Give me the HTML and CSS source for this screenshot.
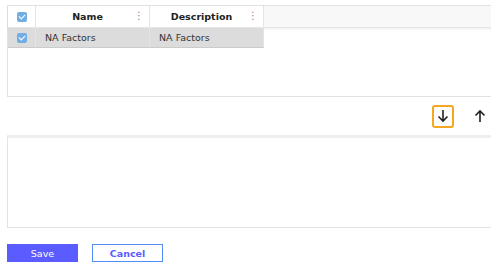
FILE: index.html
```html
<!DOCTYPE html>
<html lang="en">
<head>
    <meta charset="UTF-8">
    <title>Factors</title>
    <link rel="stylesheet" href="styles.css">
</head>
<body>
<div class="page">
    <div class="grid top-grid">
        <div class="grid-header">
            <div class="cell check-cell"><span class="checkbox"></span></div>
            <div class="cell head-cell">Name<span class="menu-dots">⋮</span></div>
            <div class="cell head-cell">Description<span class="menu-dots">⋮</span></div>
            <div class="cell filler"></div>
        </div>
        <div class="grid-row selected">
            <div class="cell check-cell"><span class="checkbox"></span></div>
            <div class="cell body-cell">NA Factors</div>
            <div class="cell body-cell">NA Factors</div>
        </div>
    </div>

    <div class="move-bar">
        <button class="move-btn focused" title="Move down">
            <svg width="12" height="14" viewBox="0 0 12 14"><path d="M6 1v11M1.5 7.5L6 12l4.5-4.5" fill="none" stroke="#222" stroke-width="1.6"/></svg>
        </button>
        <button class="move-btn" title="Move up">
            <svg width="12" height="14" viewBox="0 0 12 14"><path d="M6 13V2M1.5 6.5L6 2l4.5 4.5" fill="none" stroke="#222" stroke-width="1.6"/></svg>
        </button>
    </div>

    <div class="grid bottom-grid"></div>

    <div class="actions">
        <button class="btn btn-save">Save</button>
        <button class="btn btn-cancel">Cancel</button>
    </div>
</div>
</body>
</html>
```
FILE: styles.css
```css
html, body {
    margin: 0;
    overflow: hidden;
    background: #fff;
}

.page {
    padding: 5px 0 0 7px;
    font-family: "DejaVu Sans", Verdana, sans-serif;
    color: #333;
}

.grid {
    width: 500px;
    border: 1px solid #e2e2e2;
    box-sizing: border-box;
}

.top-grid {
    height: 92px;
}

.grid-header {
    display: flex;
    height: 21px;
    border-bottom: 1px solid #e6e6e6;
    box-shadow: 0 1px 2px rgba(0, 0, 0, 0.08);
}

.grid-row {
    display: flex;
    height: 20px;
}

.grid-row.selected .cell {
    background: #dcdcdc;
    border-bottom: 1px solid #cbcbcb;
}

.cell {
    display: flex;
    align-items: center;
    box-sizing: border-box;
    border-right: 1px solid #e4e4e4;
}

.check-cell {
    width: 28px;
    justify-content: center;
}

.head-cell,
.body-cell {
    width: 114px;
}

.head-cell {
    position: relative;
    justify-content: center;
    padding-right: 10px;
    font-size: 9.5px;
    font-weight: bold;
    color: #222;
}

.body-cell {
    padding-left: 9px;
    font-size: 9.5px;
    color: #333;
}

.filler {
    flex: 1;
    background: #f8f8f8;
    border-right: none;
}

.menu-dots {
    position: absolute;
    right: 5px;
    top: 4px;
    font-size: 10px;
    font-weight: normal;
    color: #888;
}

.checkbox {
    width: 10px;
    height: 10px;
    border-radius: 2px;
    background: #72aee6;
    position: relative;
}

.checkbox::after {
    content: "";
    position: absolute;
    left: 3px;
    top: 1px;
    width: 3px;
    height: 5px;
    border: solid #fff;
    border-width: 0 1px 1px 0;
    transform: rotate(45deg);
}

.move-bar {
    display: flex;
    justify-content: flex-end;
    align-items: center;
    gap: 15px;
    height: 38px;
}

.move-btn {
    width: 22px;
    height: 23px;
    border: 2px solid transparent;
    border-radius: 3px;
    background: none;
    padding: 0;
    display: flex;
    align-items: center;
    justify-content: center;
}

.move-btn.focused {
    border-color: #f5a623;
}

.bottom-grid {
    height: 93px;
    border-top: 3px solid #efefef;
}

.actions {
    display: flex;
    gap: 14px;
    margin-top: 16px;
}

.btn {
    width: 71px;
    height: 18px;
    font-family: "DejaVu Sans", Verdana, sans-serif;
    font-size: 9.5px;
    padding: 0;
    border-radius: 0;
}

.btn-save {
    background: #5b5cff;
    border: 1px solid #5b5cff;
    color: #fff;
}

.btn-cancel {
    background: #fff;
    border: 1px solid #4f8ef7;
    color: #5b5cff;
    font-weight: bold;
}
```
